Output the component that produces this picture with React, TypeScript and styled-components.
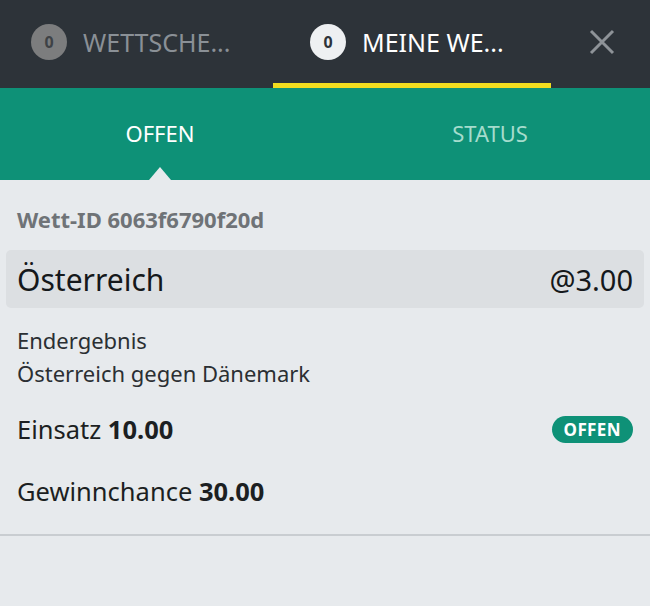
import React from "react";
import styled, { createGlobalStyle } from "styled-components";

const GlobalStyle = createGlobalStyle`
  html, body {
    margin: 0;
    padding: 0;
    background: #e7eaed;
    font-family: "Noto Sans", "Open Sans", sans-serif;
  }
`;

const Page = styled.div`
  width: 650px;
  min-height: 606px;
  background: #e7eaed;
`;

const TopBar = styled.div`
  display: flex;
  height: 88px;
  background: #2d3339;
`;

const TopTab = styled.div<{ $active?: boolean }>`
  flex: 0 0 278px;
  display: flex;
  align-items: center;
  gap: 16px;
  padding-left: ${p => (p.$active ? "37px" : "31px")};
  box-sizing: border-box;
  border-bottom: 5px solid ${p => (p.$active ? "#f2dd1f" : "transparent")};
  color: ${p => (p.$active ? "#ffffff" : "#8a9096")};
  font-size: 25px;

  &:first-child {
    flex-basis: 273px;
  }
`;

const Count = styled.span<{ $active?: boolean }>`
  width: 36px;
  height: 36px;
  border-radius: 50%;
  display: flex;
  align-items: center;
  justify-content: center;
  font-size: 16px;
  font-weight: 700;
  background: ${p => (p.$active ? "#eef0f2" : "#7c7d7e")};
  color: ${p => (p.$active ? "#2d3339" : "#3e4246")};
`;

const CloseButton = styled.div`
  flex: 1;
  display: flex;
  align-items: center;
  justify-content: flex-end;
  padding-right: 35px;
  padding-bottom: 5px;
`;

const SubTabs = styled.div`
  display: flex;
  height: 92px;
  background: #0e9177;
`;

const SubTab = styled.div<{ $active?: boolean }>`
  position: relative;
  flex: 1;
  display: flex;
  align-items: center;
  justify-content: center;
  padding-bottom: 2px;
  font-size: 22px;
  color: ${p => (p.$active ? "#ffffff" : "#a5dccd")};

  ${p =>
    p.$active &&
    `
    padding-right: 10px;
    &::after {
      content: "";
      position: absolute;
      bottom: 0;
      left: 50%;
      margin-left: -16px;
      border-left: 11px solid transparent;
      border-right: 11px solid transparent;
      border-bottom: 13px solid #e7eaed;
    }
  `}
`;

const Bet = styled.div`
  padding: 25px 6px 12px;
  border-bottom: 2px solid #c9cdd1;
`;

const BetId = styled.div`
  padding: 0 11px;
  font-size: 22px;
  font-weight: 700;
  color: #6f7377;
  line-height: 28px;
  margin-bottom: 17px;
`;

const Selection = styled.div`
  display: flex;
  justify-content: space-between;
  align-items: center;
  height: 58px;
  padding: 0 11px;
  border-radius: 5px;
  background: #dcdfe2;
  color: #15181b;
  font-size: 30px;

  span:last-child {
    font-size: 29px;
  }
`;

const Market = styled.div`
  padding: 16px 11px 0;
  font-size: 22px;
  line-height: 33px;
  color: #2b2f33;
`;

const InfoRow = styled.div<{ $first?: boolean }>`
  display: flex;
  justify-content: space-between;
  align-items: center;
  padding: 0 11px;
  height: 62px;
  margin-top: ${p => (p.$first ? "8px" : "0")};
  font-size: 25.5px;
  color: #1c1f22;

  b {
    font-weight: 700;
  }
`;

const Badge = styled.span`
  display: inline-flex;
  align-items: center;
  height: 27px;
  padding: 0 12px;
  border-radius: 14px;
  background: #0e9177;
  color: #ffffff;
  font-size: 17px;
  font-weight: 700;
  letter-spacing: 0.4px;
`;

export default function App() {
  return (
    <Page>
      <GlobalStyle />
      <TopBar>
        <TopTab>
          <Count>0</Count>
          WETTSCHE...
        </TopTab>
        <TopTab $active>
          <Count $active>0</Count>
          MEINE WE...
        </TopTab>
        <CloseButton>
          <svg width="26" height="26" viewBox="0 0 26 26">
            <path d="M2 2 L24 24 M24 2 L2 24" stroke="#8e9398" strokeWidth="3" />
          </svg>
        </CloseButton>
      </TopBar>
      <SubTabs>
        <SubTab $active>OFFEN</SubTab>
        <SubTab>STATUS</SubTab>
      </SubTabs>
      <Bet>
        <BetId>Wett-ID 6063f6790f20d</BetId>
        <Selection>
          <span>Österreich</span>
          <span>@3.00</span>
        </Selection>
        <Market>
          Endergebnis
          <br />
          Österreich gegen Dänemark
        </Market>
        <InfoRow $first>
          <span>
            Einsatz <b>10.00</b>
          </span>
          <Badge>OFFEN</Badge>
        </InfoRow>
        <InfoRow>
          <span>
            Gewinnchance <b>30.00</b>
          </span>
        </InfoRow>
      </Bet>
    </Page>
  );
}
